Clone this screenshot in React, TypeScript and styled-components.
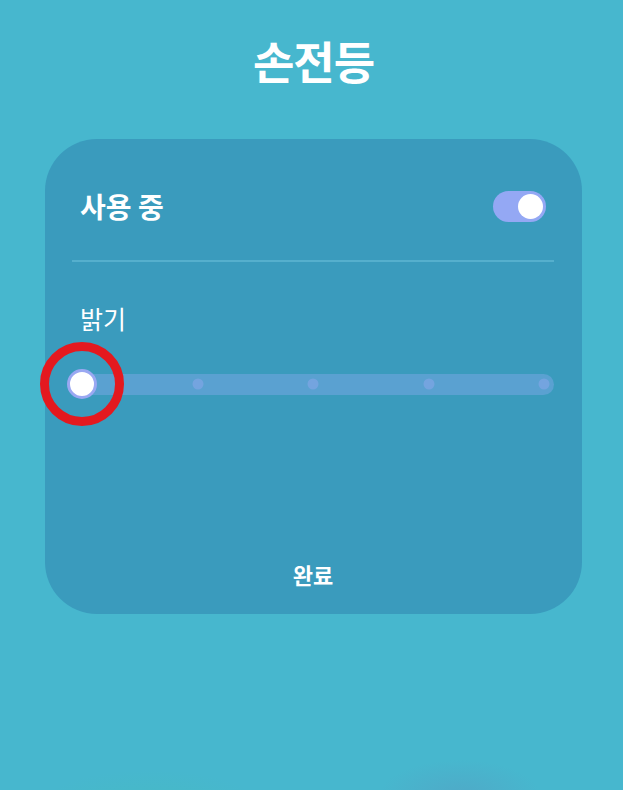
import styled, { createGlobalStyle } from 'styled-components';

const GlobalStyle = createGlobalStyle`
  html, body {
    margin: 0;
    padding: 0;
    height: 100%;
  }
  body {
    background-color: #47b7ce;
    background-image:
      radial-gradient(ellipse 80px 35px at 460px 795px, rgba(90, 150, 190, 0.4), transparent),
      radial-gradient(ellipse 110px 35px at 150px 805px, rgba(70, 190, 180, 0.3), transparent);
    font-family: "Noto Sans CJK KR", "Noto Sans", sans-serif;
    color: #ffffff;
    overflow: hidden;
  }
`;

const STEPS = 5;

export default function App(): JSX.Element {
    const level = 0;
    return (
        <>
            <GlobalStyle/>
            <Screen>
                <Title>손전등</Title>
                <Card>
                    <HeaderRow>
                        <RowLabel>사용 중</RowLabel>
                        <Toggle $on>
                            <Knob/>
                        </Toggle>
                    </HeaderRow>
                    <Divider/>
                    <SectionLabel>밝기</SectionLabel>
                    <Slider>
                        <Track>
                            {Array.from({length: STEPS}).map((_, i) => (
                                <Dot key={i} style={{left: `calc(10px + (100% - 20px) * ${i / (STEPS - 1)})`}}/>
                            ))}
                            <Thumb style={{left: `calc(10px + (100% - 20px) * ${level / (STEPS - 1)})`}}>
                                <Marker/>
                            </Thumb>
                        </Track>
                    </Slider>
                    <DoneButton>완료</DoneButton>
                </Card>
            </Screen>
        </>
    );
}

const Screen = styled.div`
  width: 623px;
  height: 790px;
  box-sizing: border-box;
  padding-left: 4px;
  display: flex;
  flex-direction: column;
  align-items: center;
`;

const Title = styled.h1`
  margin: 0;
  height: 120px;
  display: flex;
  align-items: center;
  justify-content: center;
  font-size: 45px;
  font-weight: 700;
  letter-spacing: -1px;
`;

const Card = styled.div`
  margin-top: 19px;
  width: 537px;
  height: 475px;
  box-sizing: border-box;
  padding: 30px 28px 0 27px;
  background: #3a9bbd;
  border-radius: 52px;
  display: flex;
  flex-direction: column;
`;

const HeaderRow = styled.div`
  height: 74px;
  padding: 0 8px;
  display: flex;
  align-items: center;
  justify-content: space-between;
`;

const RowLabel = styled.span`
  font-size: 28px;
  font-weight: 700;
`;

const Toggle = styled.div<{ $on?: boolean }>`
  width: 53px;
  height: 31px;
  border-radius: 16px;
  background: ${p => (p.$on ? '#94a8f4' : '#5c8fb0')};
  display: flex;
  align-items: center;
  justify-content: ${p => (p.$on ? 'flex-end' : 'flex-start')};
  padding: 0 3px;
  box-sizing: border-box;
`;

const Knob = styled.div`
  width: 25px;
  height: 25px;
  border-radius: 50%;
  background: #ffffff;
`;

const Divider = styled.div`
  margin-top: 17px;
  height: 2px;
  background: rgba(120, 200, 225, 0.45);
`;

const SectionLabel = styled.div`
  margin-top: 39px;
  padding: 0 8px;
  font-size: 25px;
  font-weight: 400;
  line-height: 34px;
`;

const Slider = styled.div`
  margin-top: 34px;
  height: 30px;
  display: flex;
  align-items: center;
`;

const Track = styled.div`
  position: relative;
  flex: 1;
  height: 21px;
  border-radius: 11px;
  background: #5aa1d1;
`;

const Dot = styled.span`
  position: absolute;
  top: 50%;
  width: 11px;
  height: 11px;
  border-radius: 50%;
  background: #74a4df;
  transform: translate(-50%, -50%);
`;

const Thumb = styled.span`
  position: absolute;
  top: 50%;
  width: 24px;
  height: 24px;
  border-radius: 50%;
  background: #ffffff;
  border: 3px solid #9aa8f2;
  transform: translate(-50%, -50%);
`;

const Marker = styled.span`
  position: absolute;
  left: 50%;
  top: 50%;
  width: 66px;
  height: 66px;
  border-radius: 50%;
  border: 9px solid #e4191f;
  transform: translate(-50%, -50%);
`;

const DoneButton = styled.button`
  margin-top: auto;
  height: 80px;
  border: none;
  background: transparent;
  color: #ffffff;
  font-family: "Noto Sans CJK KR", "Noto Sans", sans-serif;
  font-size: 22px;
  font-weight: 700;
  cursor: pointer;
`;
